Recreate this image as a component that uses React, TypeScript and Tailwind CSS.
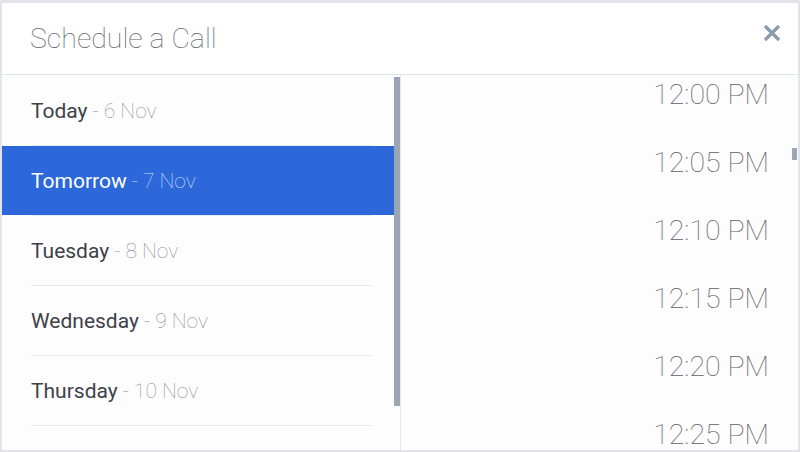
import React from 'react';

const days = [
  { name: 'Today', date: '6 Nov' },
  { name: 'Tomorrow', date: '7 Nov', active: true },
  { name: 'Tuesday', date: '8 Nov' },
  { name: 'Wednesday', date: '9 Nov' },
  { name: 'Thursday', date: '10 Nov' },
];

const times = ['12:00 PM', '12:05 PM', '12:10 PM', '12:15 PM', '12:20 PM', '12:25 PM'];

function CloseIcon() {
  return (
    <svg width="18" height="18" viewBox="0 0 18 18" className="text-[#8e9bad] mb-[12px]">
      <path d="M2 2 L16 16 M16 2 L2 16" stroke="currentColor" strokeWidth="3.4" />
    </svg>
  );
}

function DayRow({ name, date, active }: { name: string; date: string; active?: boolean }) {
  return (
    <div>
      <div
        className={`h-[69px] flex items-center pl-[29px] pt-[2px] text-[21px] ${
          active ? 'bg-[#2c68d9]' : ''
        }`}
      >
        <span className={active ? 'text-white' : 'text-[#3d4148]'}>{name}</span>
        <span className={`font-thin ml-[5px] ${active ? 'text-[#d0ddf8]' : 'text-[#8f9298]'}`}>
          - {date}
        </span>
      </div>
      <div className="h-px bg-[#e6eaef] ml-[29px] mr-[22px]" />
    </div>
  );
}

export default function App() {
  return (
    <div
      className="w-[800px] h-[452px] bg-[#fdfdfd] border-2 border-t-[3px] border-[#e1e4e8] flex flex-col overflow-hidden"
      style={{ fontFamily: 'Roboto, "Liberation Sans", sans-serif' }}
    >
      {/* Header */}
      <div className="h-[72px] shrink-0 flex items-center justify-between pl-[28px] pr-[17px] border-b border-[#dfe3e8] bg-white">
        <h1 className="text-[28.5px] font-thin text-[#63676f] pt-[2px]">Schedule a Call</h1>
        <CloseIcon />
      </div>

      {/* Body */}
      <div className="flex flex-1 min-h-0">
        {/* Days */}
        <div className="w-[398px] shrink-0 flex">
          <div className="flex-1 overflow-hidden pt-[1px]">
            {days.map((d) => (
              <DayRow key={d.name} {...d} />
            ))}
          </div>
          <div className="w-[6px] pt-[2px]">
            <div className="h-[329px] bg-[#9ba6b5]" />
          </div>
        </div>

        {/* Times */}
        <div className="flex-1 flex border-l border-[#e3e6ea] overflow-hidden">
          <div className="flex-1 overflow-hidden">
            <div className="-mt-[14px] pr-[23px]">
              {times.map((t) => (
                <div key={t} className="h-[68px] flex items-center justify-end text-[28.5px] font-thin text-[#5c6067]">
                  {t}
                </div>
              ))}
            </div>
          </div>
          <div className="w-[5px] pt-[73px] mr-px">
            <div className="h-[12px] bg-[#9ba6b5]" />
          </div>
        </div>
      </div>
    </div>
  );
}
